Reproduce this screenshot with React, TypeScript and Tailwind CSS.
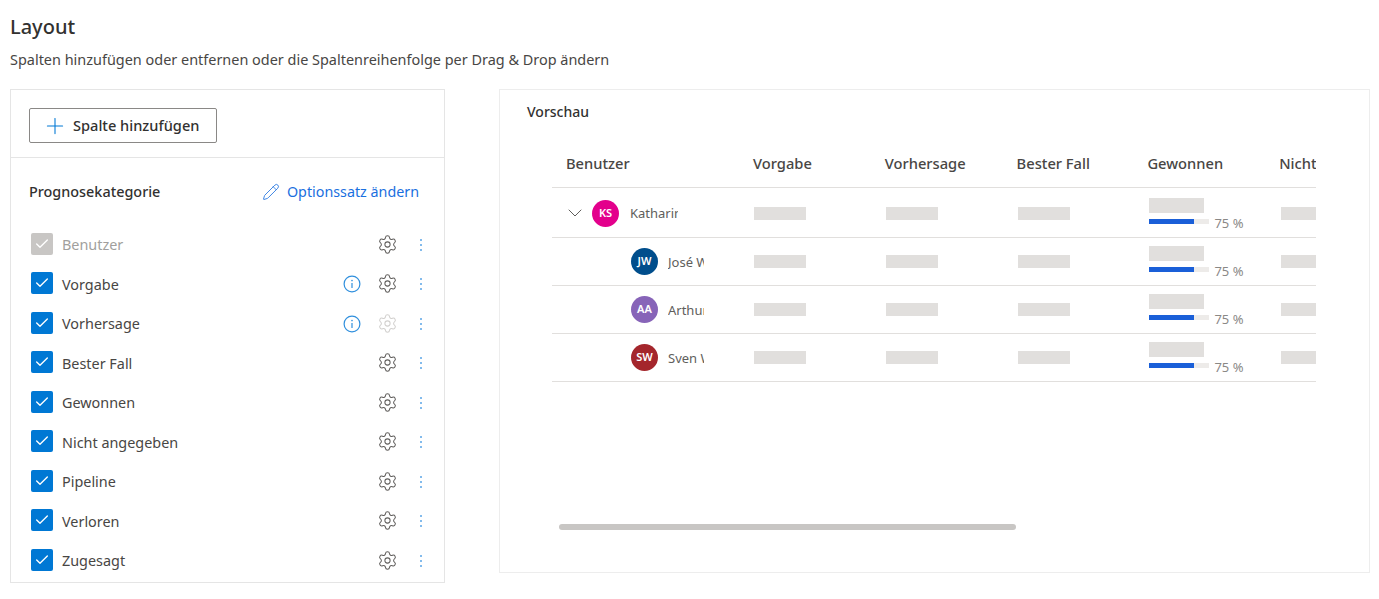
import { Check, ChevronDown, Pencil, Plus, Settings } from 'lucide-react';

const font = 'font-["Noto_Sans","Open_Sans",sans-serif]';

const categories = [
  { name: 'Benutzer', disabled: true },
  { name: 'Vorgabe', info: true },
  { name: 'Vorhersage', info: true, gearOff: true },
  { name: 'Bester Fall' },
  { name: 'Gewonnen' },
  { name: 'Nicht angegeben' },
  { name: 'Pipeline' },
  { name: 'Verloren' },
  { name: 'Zugesagt' },
];

const people = [
  { initials: 'KS', name: 'Katharina', color: 'bg-[#e3008c]', parent: true },
  { initials: 'JW', name: 'José Wagner', color: 'bg-[#004e8c]' },
  { initials: 'AA', name: 'Arthur Adler', color: 'bg-[#8764b8]' },
  { initials: 'SW', name: 'Sven Weber', color: 'bg-[#a4262c]' },
];

function Dots() {
  return (
    <svg width="4" height="14" viewBox="0 0 4 14" className="text-[#5aa5e6]">
      <circle cx="2" cy="2" r="1" fill="currentColor" />
      <circle cx="2" cy="7" r="1" fill="currentColor" />
      <circle cx="2" cy="12" r="1" fill="currentColor" />
    </svg>
  );
}

function InfoIcon() {
  return (
    <svg width="18" height="18" viewBox="0 0 18 18" fill="none" className="text-[#2f8fdd]">
      <circle cx="9" cy="9" r="7.9" stroke="currentColor" strokeWidth="1.2" />
      <circle cx="9" cy="5.6" r="0.8" fill="currentColor" />
      <path d="M9 8v5" stroke="currentColor" strokeWidth="1.2" />
    </svg>
  );
}

function CategoryRow({ name, disabled, info, gearOff }: { name: string; disabled?: boolean; info?: boolean; gearOff?: boolean }) {
  return (
    <div className="flex h-[39.5px] items-center">
      <div className={`mb-[2px] flex h-[22px] w-[22px] items-center justify-center rounded-[2px] ${disabled ? 'bg-[#c8c6c4]' : 'bg-[#0078d4]'}`}>
        <Check size={16} strokeWidth={2} className="text-white" />
      </div>
      <span className={`ml-[9px] flex-1 pt-[1px] text-[14.4px] ${disabled ? 'text-[#a19f9d]' : 'text-[#484644]'}`}>{name}</span>
      {info && <InfoIcon />}
      <Settings size={21} strokeWidth={1.15} className={`mb-[1px] ml-[16px] ${gearOff ? 'text-[#d2d0ce]' : 'text-[#605e5c]'}`} />
      <div className="ml-[21px] mr-[21px] flex w-[4px] items-center">
        <Dots />
      </div>
    </div>
  );
}

function Placeholder() {
  return <div className="h-[13px] w-[52px] bg-[#e1dfdd]" />;
}

function PersonRow({ initials, name, color, parent }: { initials: string; name: string; color: string; parent?: boolean }) {
  return (
    <div className={`grid grid-cols-[200px_131.8px_131.8px_131.8px_131.8px_131.8px] items-center border-b border-[#e1dfdd] ${parent ? 'h-[50px] pt-[1px]' : 'h-[48px]'}`}>
      <div className={`flex items-center ${parent ? 'pl-[11px]' : 'pl-[79px]'}`}>
        {parent && <ChevronDown size={24} strokeWidth={1} className="mr-[5px] text-[#605e5c]" />}
        <div className={`flex h-[27px] w-[27px] shrink-0 items-center justify-center rounded-full text-[11px] font-semibold text-white ${color}`}>
          {initials}
        </div>
        <div className={`overflow-hidden whitespace-nowrap pt-[2px] text-[13px] text-[#605e5c] ${parent ? 'ml-[11px] w-[48px]' : 'ml-[10px] w-[36px]'}`}>{name}</div>
      </div>
      <div className="pl-[2px]"><Placeholder /></div>
      <div className="pl-[2px]"><Placeholder /></div>
      <div className="pl-[2px]"><Placeholder /></div>
      <div className={`self-start pl-[2px] ${parent ? 'pt-[9px]' : 'pt-[8px]'}`}>
        <div className="h-[15px] w-[55px] bg-[#e1dfdd]" />
        <div className="mt-[6px] flex items-start">
          <div className="h-[5px] w-[60px] bg-[#edebe9]">
            <div className="h-full w-[45px] bg-[#1a5fd8]" />
          </div>
          <span className="ml-[5px] mt-[-4px] text-[13px] leading-[16px] text-[#8a8886]">75 %</span>
        </div>
      </div>
      <div className="pl-[2px]"><Placeholder /></div>
    </div>
  );
}

export default function App() {
  return (
    <main className={`h-[599px] w-[1379px] overflow-hidden bg-white pl-[10px] pt-[12px] ${font}`}>
      <h1 className="text-[20px] font-medium leading-[30px] text-[#323130]">Layout</h1>
      <p className="mt-[8px] text-[14.45px] leading-[20px] text-[#484644]">
        Spalten hinzufügen oder entfernen oder die Spaltenreihenfolge per Drag &amp; Drop ändern
      </p>

      <div className="mt-[19px] flex items-start gap-[54px]">
        {/* Column picker */}
        <section className="h-[494px] w-[435px] border border-[#e5e5e5]">
          <div className="h-[68px] border-b border-[#e5e5e5] pl-[18px] pt-[18px]">
            <button className="flex h-[35px] w-[188px] items-center rounded-[2px] border border-[#8a8886] pl-[12px] text-[14.6px] font-medium text-[#323130]">
              <Plus size={26} strokeWidth={1} className="mr-[5px] text-[#0078d4]" />
              Spalte hinzufügen
            </button>
          </div>
          <div className="flex h-[67px] items-center justify-between pl-[18px] pr-[25px]">
            <span className="text-[14.4px] font-medium text-[#323130]">Prognosekategorie</span>
            <span className="flex items-center text-[14.3px] text-[#1a6fe0]">
              <Pencil size={18} strokeWidth={1.1} className="mr-[7px]" />
              Optionssatz ändern
            </span>
          </div>
          <div className="pl-[20px]">
            {categories.map((c) => (
              <CategoryRow key={c.name} {...c} />
            ))}
          </div>
        </section>

        {/* Preview */}
        <section className="relative h-[484px] w-[871px] border border-[#ededed] pl-[27px] pt-[11px]">
          <h2 className="text-[14px] font-medium leading-[21px] text-[#323130]">Vorschau</h2>
          <div className="ml-[25px] mt-[18px] w-[764px] overflow-hidden">
            <div className="grid h-[48px] grid-cols-[200px_131.8px_131.8px_131.8px_131.8px_131.8px] items-center border-b border-[#e1dfdd] text-[14.7px] font-medium text-[#484644]">
              <span className="pl-[14px]">Benutzer</span>
              <span className="pl-[1px]">Vorgabe</span>
              <span className="pl-[1px]">Vorhersage</span>
              <span className="pl-[1px]">Bester Fall</span>
              <span>Gewonnen</span>
              <span className="whitespace-nowrap">Nicht angegeben</span>
            </div>
            {people.map((p) => (
              <PersonRow key={p.initials} {...p} />
            ))}
          </div>
          <div className="absolute left-[59px] top-[434px] h-[6px] w-[457px] rounded-full bg-[#c8c6c4]" />
        </section>
      </div>
    </main>
  );
}
